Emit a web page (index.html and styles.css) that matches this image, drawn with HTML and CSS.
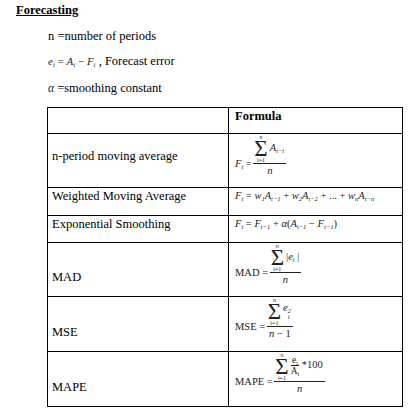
FILE: index.html
```html
<!DOCTYPE html>
<html>
<head>
<meta charset="utf-8">
<link rel="stylesheet" href="styles.css">
</head>
<body>
<div class="page">
  <h1 class="title">Forecasting</h1>
  <p class="def">n =number of periods</p>
  <p class="def"><span class="m">e<sub>i</sub><span class="op">=</span>A<sub>i</sub><span class="op">−</span>F<sub>i</sub></span> , Forecast error</p>
  <p class="def def-last"><span class="m alpha">α</span> =smoothing constant</p>

  <table class="tbl">
    <colgroup><col class="c1"><col class="c2"></colgroup>
    <tr class="r-head">
      <td class="lab top"></td>
      <td class="fx top"><b>Formula</b></td>
    </tr>
    <tr class="r-big">
      <td class="lab mid">n-period moving average</td>
      <td class="fx ftop p1">
        <span class="frac m">
          <span class="lhs">F<sub>t</sub><span class="op">=</span></span>
          <span class="num"><span class="sum"><span class="lim">n</span><span class="sig">Σ</span><span class="lim up">i=1</span></span><span class="tm">A<sub>t−i</sub></span></span>
          <span class="den">n</span>
        </span>
      </td>
    </tr>
    <tr class="r-w">
      <td class="lab top">Weighted Moving Average</td>
      <td class="fx ftop p2"><span class="m line">F<sub>t</sub><span class="op">=</span>w<sub>1</sub>A<sub>t−1</sub><span class="op">+</span>w<sub>2</sub>A<sub>t−2</sub><span class="op">+</span><span class="up">...</span><span class="op">+</span>w<sub>n</sub>A<sub>t−n</sub></span></td>
    </tr>
    <tr class="r-e">
      <td class="lab top">Exponential Smoothing</td>
      <td class="fx ftop p0"><span class="m line">F<sub>t</sub><span class="op">=</span>F<sub>t−1</sub><span class="op">+</span>α<span class="up">(</span>A<sub>t−1</sub><span class="op">−</span>F<sub>t−1</sub><span class="up">)</span></span></td>
    </tr>
    <tr class="r-s1">
      <td class="lab bot">MAD</td>
      <td class="fx ftop p1">
        <span class="frac m">
          <span class="lhs up">MAD<span class="op">=</span></span>
          <span class="num"><span class="sum"><span class="lim">n</span><span class="sig">Σ</span><span class="lim up">i=1</span></span><span class="tm"><span class="up">|</span>e<sub>i</sub><span class="up"> |</span></span></span>
          <span class="den">n</span>
        </span>
      </td>
    </tr>
    <tr class="r-s2">
      <td class="lab bot">MSE</td>
      <td class="fx ftop p1">
        <span class="frac m">
          <span class="lhs up">MSE<span class="op">=</span></span>
          <span class="num"><span class="sum"><span class="lim">n</span><span class="sig">Σ</span><span class="lim up">i=1</span></span><span class="tm">e<span class="sq"><sup>2</sup><sub>i</sub></span></span></span>
          <span class="den">n<span class="op">−</span><span class="up">1</span></span>
        </span>
      </td>
    </tr>
    <tr class="r-s3">
      <td class="lab bot">MAPE</td>
      <td class="fx ftop p2">
        <span class="frac m">
          <span class="lhs up">MAPE<span class="op">=</span></span>
          <span class="num"><span class="sum"><span class="lim">n</span><span class="sig">Σ</span><span class="lim up">i=1</span></span><span class="tm up"><span class="ifrac"><span class="inum">e<sub>i</sub></span><span class="iden">A<sub>i</sub></span></span> *100</span></span>
          <span class="den">n</span>
        </span>
      </td>
    </tr>
  </table>
</div>
</body>
</html>
```

FILE: styles.css
```css
html, body {
  margin: 0;
  padding: 0;
  background: #fff;
}
body {
  font-family: "Liberation Serif", "Times New Roman", serif;
  font-size: 12.5px;
  line-height: 15px;
  color: #000;
}
.page {
  padding-top: 3px;
}
.title {
  margin: 0 0 0 16px;
  font-size: 12.5px;
  line-height: 15px;
  font-weight: bold;
  text-decoration: underline;
}
.def {
  margin: 11px 0 0 48px;
}
.def + .def {
  margin-top: 10px;
}
.def-last {
  margin-top: 12px !important;
}
.m {
  font-style: italic;
  font-size: 11px;
  color: #222;
}
.alpha {
  font-size: 11.5px;
}
.up {
  font-style: normal;
}
.op {
  font-style: normal;
  margin: 0 0.25em;
}
sub, sup {
  font-size: 0.62em;
  line-height: 0;
}
sub {
  vertical-align: -0.35em;
}
sup {
  vertical-align: 0.6em;
}

.tbl {
  margin: 11px 0 0 47px;
  border-collapse: collapse;
  table-layout: fixed;
  width: 355px;
}
.c1 { width: 181px; }
.c2 { width: 174px; }
.tbl td {
  border: 1px solid #000;
  padding: 0 4px;
}
.tbl td.fx {
  padding-left: 6px;
}
.r-head { height: 26px; }
.r-big { height: 54px; }
.r-w { height: 28px; }
.r-e { height: 27px; }
.r-s1 { height: 54px; }
.r-s2 { height: 55px; }
.r-s3 { height: 55px; }

.lab.top, .fx.top { vertical-align: top; padding-top: 1px; }
.lab.mid { vertical-align: middle; padding-bottom: 8px; }
.lab.bot { vertical-align: bottom; padding-bottom: 11px; }
.fx.ftop { vertical-align: top; }
.p0 { padding-top: 0; }
.p1 { padding-top: 1px; }
.p2 { padding-top: 2px; }

.m.line {
  font-size: 10.5px;
  line-height: 12px;
}

.frac {
  display: inline-grid;
  grid-template-columns: auto auto;
  font-size: 10.5px;
  line-height: 12px;
}
.lhs {
  grid-row: 1;
  grid-column: 1;
  align-self: end;
  transform: translateY(50%);
  white-space: nowrap;
}
.lhs .op { margin-right: 0.15em; }
.num {
  grid-row: 1;
  grid-column: 2;
  display: flex;
  align-items: center;
  border-bottom: 1px solid #222;
  padding: 0 2px 0 1px;
}
.den {
  grid-row: 2;
  grid-column: 2;
  text-align: center;
  line-height: 11px;
  padding-top: 1px;
}
.sum {
  display: inline-flex;
  flex-direction: column;
  align-items: center;
}
.lim {
  font-size: 6px;
  line-height: 6px;
}
.sig {
  font-style: normal;
  font-size: 23px;
  line-height: 17px;
}
.tm {
  margin-left: 2px;
  margin-bottom: 2px;
  white-space: nowrap;
}
.sq {
  display: inline-flex;
  flex-direction: column;
  vertical-align: -2px;
  font-size: 0.62em;
  line-height: 6px;
}
.sq sup, .sq sub {
  font-size: 1em;
  vertical-align: 0;
  line-height: 6px;
}
.ifrac {
  display: inline-flex;
  flex-direction: column;
  align-items: center;
  vertical-align: middle;
  font-size: 9.5px;
  line-height: 10px;
}
.inum {
  border-bottom: 1px solid #222;
  padding: 0 1px;
}
```
